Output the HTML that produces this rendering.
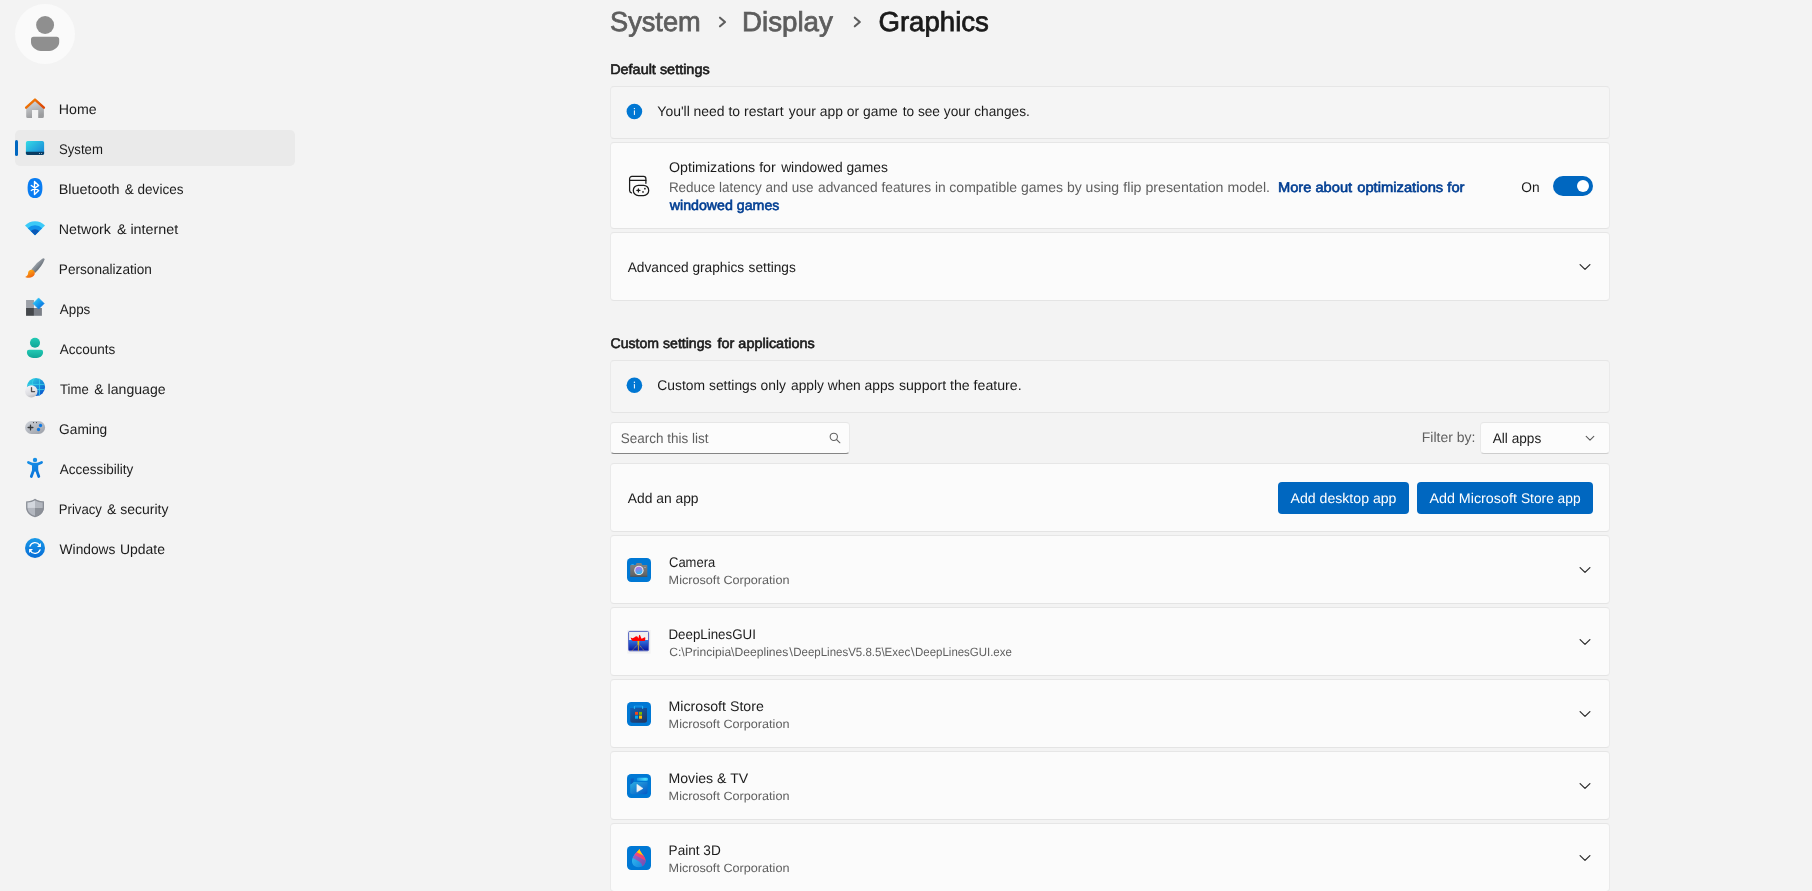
<!DOCTYPE html>
<html lang="en"><head><meta charset="utf-8"><title>Settings</title>
<style>
html,body{margin:0;padding:0;}
body{width:1812px;height:891px;overflow:hidden;background:#f3f3f3;position:relative;font-family:"Liberation Sans",sans-serif;}
.t{text-rendering:geometricPrecision;position:absolute;white-space:pre;line-height:20px;transform-origin:0 50%;display:block;}
.a{position:absolute;box-sizing:border-box;}
.card{position:absolute;box-sizing:border-box;left:610px;width:1000px;background:#fbfbfb;border:1px solid #eaeaea;border-top-color:#e6e6e6;border-bottom-color:#e4e4e4;border-radius:4px;}
.info{background:#f5f5f5;}
svg{position:absolute;overflow:visible;}
#txt{position:absolute;left:0;top:0;width:1812px;height:891px;will-change:transform;}

</style></head>
<body>
<!-- sidebar -->
<div class="a" style="left:15px;top:4px;width:60px;height:60px;border-radius:50%;background:#fafafa;"></div>
<div class="a" style="left:15px;top:130px;width:280px;height:36px;border-radius:5px;background:#eaeaea;"></div>
<div class="a" style="left:15px;top:140px;width:3px;height:16px;border-radius:2px;background:#0067c0;"></div>

<!-- cards -->
<div class="card info" style="top:86px;height:53px;"></div>
<div class="card" style="top:142px;height:87px;"></div>
<div class="card" style="top:232px;height:69px;"></div>
<div class="card info" style="top:360px;height:53px;"></div>
<div class="card" style="top:463px;height:69px;"></div>
<div class="card" style="top:535px;height:69px;"></div>
<div class="card" style="top:607px;height:69px;"></div>
<div class="card" style="top:679px;height:69px;"></div>
<div class="card" style="top:751px;height:69px;"></div>
<div class="card" style="top:823px;height:69px;"></div>

<!-- search + filter -->
<div class="a" style="left:610px;top:422px;width:240px;height:32px;background:#fcfcfc;border:1px solid #e9e9e9;border-top-color:#e6e6e6;border-bottom-color:#858585;border-radius:4px;"></div>
<div class="a" style="left:1480px;top:422px;width:130px;height:32px;background:#fcfcfc;border:1px solid #e9e9e9;border-top-color:#e6e6e6;border-bottom-color:#cdcdcd;border-radius:4px;"></div>

<!-- buttons -->
<div class="a" style="left:1278px;top:482px;width:131px;height:32px;background:#0067c0;border-radius:4px;"></div>
<div class="a" style="left:1417px;top:482px;width:176px;height:32px;background:#0067c0;border-radius:4px;"></div>

<!-- toggle -->
<div class="a" style="left:1553px;top:176px;width:40px;height:20px;background:#0067c0;border-radius:10px;"></div>
<div class="a" style="left:1577px;top:180px;width:12px;height:12px;background:#ffffff;border-radius:6px;"></div>

<svg width="1812" height="891" viewBox="0 0 1812 891" style="left:0;top:0;">
<defs>
<linearGradient id="gRoof" x1="0" y1="0" x2="1" y2="0.6"><stop offset="0" stop-color="#f78a05"/><stop offset="1" stop-color="#de4a05"/></linearGradient>
<linearGradient id="gHouse" x1="0" y1="0" x2="0.3" y2="1"><stop offset="0" stop-color="#dde0e3"/><stop offset="1" stop-color="#9b9c9e"/></linearGradient>
<linearGradient id="gSys" x1="0" y1="0" x2="1" y2="1"><stop offset="0" stop-color="#34dbe6"/><stop offset="1" stop-color="#167fd6"/></linearGradient>
<linearGradient id="gDia" x1="0.2" y1="0.2" x2="0.8" y2="0.8"><stop offset="0" stop-color="#2ac3f8"/><stop offset="1" stop-color="#0875e0"/></linearGradient>
<linearGradient id="gAcc" x1="0" y1="0" x2="0" y2="1"><stop offset="0" stop-color="#22cab4"/><stop offset="1" stop-color="#10a596"/></linearGradient>
<linearGradient id="gGlobe" x1="0.15" y1="0.1" x2="0.85" y2="0.9"><stop offset="0" stop-color="#2ccde0"/><stop offset="1" stop-color="#0858cf"/></linearGradient>
<linearGradient id="gClock" x1="0.3" y1="0" x2="0.6" y2="1"><stop offset="0" stop-color="#f4f4f7"/><stop offset="0.7" stop-color="#dcdce0"/><stop offset="1" stop-color="#b8b8bc"/></linearGradient>
<linearGradient id="gPad" x1="0.1" y1="0" x2="0.9" y2="1"><stop offset="0" stop-color="#cdd1d8"/><stop offset="1" stop-color="#9da1a9"/></linearGradient>
<linearGradient id="gBrushH" x1="0" y1="0" x2="1" y2="1" gradientTransform="rotate(0)"><stop offset="0.3" stop-color="#a4abb3"/><stop offset="0.7" stop-color="#5f676f"/></linearGradient>
<linearGradient id="gBrushT" x1="0.2" y1="0" x2="0.8" y2="1"><stop offset="0" stop-color="#ffb612"/><stop offset="1" stop-color="#ee5a10"/></linearGradient>
<linearGradient id="gPerson" gradientUnits="userSpaceOnUse" x1="30" y1="458" x2="40" y2="478"><stop offset="0" stop-color="#1a94e8"/><stop offset="1" stop-color="#066ed8"/></linearGradient>
<linearGradient id="gUpd" x1="0" y1="0" x2="0" y2="1"><stop offset="0" stop-color="#1a9ae8"/><stop offset="1" stop-color="#066cd6"/></linearGradient>
<linearGradient id="gCam" x1="0" y1="0" x2="0" y2="1"><stop offset="0" stop-color="#858585"/><stop offset="1" stop-color="#606162"/></linearGradient>
<linearGradient id="gLens" x1="0.3" y1="0" x2="0.6" y2="1"><stop offset="0" stop-color="#bb6be8"/><stop offset="1" stop-color="#28bdf2"/></linearGradient>
<linearGradient id="gWater" x1="0" y1="0" x2="0" y2="1"><stop offset="0" stop-color="#3478e2"/><stop offset="1" stop-color="#06129a"/></linearGradient>
<linearGradient id="gBag" x1="0.2" y1="0" x2="0.8" y2="1"><stop offset="0" stop-color="#0f5cb0"/><stop offset="1" stop-color="#223763"/></linearGradient>
<linearGradient id="gMov" x1="0" y1="0" x2="1" y2="1"><stop offset="0" stop-color="#2cade2"/><stop offset="1" stop-color="#0658c4"/></linearGradient>
<linearGradient id="gMovBar" x1="0" y1="0" x2="1" y2="0"><stop offset="0" stop-color="#1a96e4"/><stop offset="0.75" stop-color="#4fe0ff"/><stop offset="1" stop-color="#35c4f4"/></linearGradient>
<linearGradient id="gP3b" x1="0" y1="0" x2="1" y2="1"><stop offset="0" stop-color="#3cd0f6"/><stop offset="1" stop-color="#0f74da"/></linearGradient>
<linearGradient id="gP3p" x1="0" y1="0" x2="1" y2="1"><stop offset="0" stop-color="#a86cd6"/><stop offset="1" stop-color="#7048a8"/></linearGradient>
<linearGradient id="gP3r" x1="0" y1="0" x2="1" y2="1"><stop offset="0" stop-color="#f4548a"/><stop offset="1" stop-color="#ec3868"/></linearGradient>
<clipPath id="cDrop"><path d="M639.6 848.9 C640 851.6 642.2 853.8 644.2 856.8 C646.6 860.4 645.6 864.6 642 866.4 C638.4 868.1 633.9 867 632.4 863.4 C631 859.9 633 856.4 635.5 853.4 C637.4 851.3 639 850 639.6 848.9Z"/></clipPath>
<clipPath id="cShield"><path id="pShield" d="M35 498.8 C37.5 500.5 40.5 501.4 44 501.5 V507 C44 512.4 40 515.8 35 517.2 C30 515.8 26.1 512.4 26.1 507 V501.5 C29.5 501.4 32.5 500.5 35 498.8Z"/></clipPath>
<clipPath id="cGlobe"><circle cx="36" cy="387" r="9.1"/></clipPath>
</defs>
<g fill="#8f8f8f"><circle cx="45.1" cy="25" r="9"/><path d="M33.6 36.8 H56.6 a2.6 2.6 0 0 1 2.6 2.6 V42.3 C59.2 47 54 50.9 49.3 50.9 H40.9 C36.2 50.9 31 47 31 42.3 V39.4 a2.6 2.6 0 0 1 2.6 -2.6z"/></g>
<path d="M26.2 107.6 L35 99.9 L43.9 107.6 V116.4 a1.5 1.5 0 0 1 -1.5 1.5 H38.2 V110 H32 V117.9 H27.7 a1.5 1.5 0 0 1 -1.5 -1.5z" fill="url(#gHouse)"/>
<path d="M26.1 107.7 L35 99.6 L43.9 107.7" stroke="url(#gRoof)" stroke-width="2.4" stroke-linecap="round" stroke-linejoin="round" fill="none"/>
<rect x="25.9" y="140.9" width="18.2" height="14.1" rx="1.8" fill="url(#gSys)"/>
<path d="M25.9 151.8 H44.1 V153.2 a1.8 1.8 0 0 1 -1.8 1.8 H27.7 a1.8 1.8 0 0 1 -1.8 -1.8z" fill="#0a3c62"/>
<circle cx="39.5" cy="153.5" r="0.55" fill="#b7c7d6"/><circle cx="41.6" cy="153.5" r="0.55" fill="#b7c7d6"/>
<path d="M35 177.9 C40.6 177.9 42.4 182 42.4 188 C42.4 194 40.6 198.1 35 198.1 C29.4 198.1 27.6 194 27.6 188 C27.6 182 29.4 177.9 35 177.9Z" fill="#0a7df2"/>
<path d="M31.3 185.5 L38.7 190.6 L34.5 194.5 V181.4 L38.7 185.4 L31.3 190.5" stroke="#fff" stroke-width="1.35" fill="none" stroke-linejoin="round" stroke-linecap="round"/>
<path d="M35 235.2 L25.00 225.54 A13.9 13.9 0 0 1 45.00 225.54Z" fill="#3ccaf7"/>
<path d="M35 235.2 L27.81 228.25 A10.0 10.0 0 0 1 42.19 228.25Z" fill="#1292ea"/>
<path d="M35 235.2 L30.76 231.10 A5.9 5.9 0 0 1 39.24 231.10Z" fill="#0a58b6"/>
<path d="M42.2 258.8 Q43.9 257.6 44.7 259.3 Q42 266.5 35 273 L31.3 269.6 Q36.5 262.5 42.2 258.8Z" fill="url(#gBrushH)"/>
<path d="M28.1 273 C28 270.6 30.3 269.2 32.3 269.8 C34.3 270.4 35.3 272.5 34.6 274.6 C33.6 277.6 29 278.7 25.1 276.9 C27.2 276 28.2 274.8 28.1 273Z" fill="url(#gBrushT)"/>
<rect x="26.05" y="300" width="7.9" height="8" fill="#9da1a8"/>
<rect x="26.05" y="308" width="7.9" height="7.8" fill="#44474b"/>
<rect x="33.95" y="308" width="7.95" height="7.8" fill="#7b7f87"/>
<path d="M38.6 297.9 L44.2 303.5 L38.6 309.1 L33 303.5Z" fill="url(#gDia)" stroke="url(#gDia)" stroke-width="0.6" stroke-linejoin="round"/>
<circle cx="35" cy="342.8" r="5.05" fill="url(#gAcc)"/>
<path d="M29 349.8 H41 a2.1 2.1 0 0 1 2.1 2.1 c0 4.1 -3.6 6.2 -8.1 6.2 s-8.1 -2.1 -8.1 -6.2 a2.1 2.1 0 0 1 2.1 -2.1z" fill="url(#gAcc)"/>
<circle cx="36" cy="387" r="9.1" fill="url(#gGlobe)"/>
<g clip-path="url(#cGlobe)" stroke="#3ad6ea" stroke-width="0.9" fill="none" opacity="0.9"><path d="M26 384.4 H46 M26 389.6 H46 M39.4 377 V397"/><path d="M34 377.5 Q31.5 382 32.5 388"/></g>
<circle cx="31.3" cy="391.4" r="6.2" fill="url(#gClock)"/>
<path d="M31.5 387.6 V391.6 H34.6" stroke="#4f4f52" stroke-width="1.3" fill="none" stroke-linecap="round" stroke-linejoin="round"/>
<rect x="25.05" y="421.1" width="20.05" height="12.8" rx="6.4" fill="url(#gPad)"/>
<path d="M28.1 427.5 H32.9 M30.5 425.1 V429.9" stroke="#36383b" stroke-width="1.3" stroke-linecap="round"/>
<circle cx="33.5" cy="422.6" r="0.55" fill="#3c3d40"/><circle cx="36.5" cy="422.6" r="0.55" fill="#3c3d40"/>
<circle cx="40.5" cy="425.5" r="1.65" fill="#0f78e2"/><circle cx="38.5" cy="429.5" r="1.65" fill="#0f78e2"/>
<g fill="url(#gPerson)" stroke="url(#gPerson)"><circle cx="35" cy="459.9" r="2.2" stroke="none"/><path d="M28.4 462.4 L32.6 464.2 H37.4 L41.6 462.4" fill="none" stroke-width="2.7" stroke-linecap="round" stroke-linejoin="round"/><rect x="32" y="463.2" width="6.2" height="8.3" stroke="none"/><path d="M33.4 470.5 L31.3 476.5 M36.7 470.5 L38.8 476.5" fill="none" stroke-width="2.8" stroke-linecap="round"/></g>
<g clip-path="url(#cShield)"><rect x="26" y="498" width="9" height="9.7" fill="#d3d7de"/><rect x="35" y="498" width="9.1" height="9.7" fill="#b3b7bf"/><rect x="26" y="507.7" width="9" height="10" fill="#b3b7bf"/><rect x="35" y="507.7" width="9.1" height="10" fill="#8d9199"/><path d="M35 498.8 C37.5 500.5 40.5 501.4 44 501.5 V507 C44 512.4 40 515.8 35 517.2 C30 515.8 26.1 512.4 26.1 507 V501.5 C29.5 501.4 32.5 500.5 35 498.8Z" fill="none" stroke="#8a8e96" stroke-width="2.6"/></g>
<circle cx="35" cy="548" r="10" fill="url(#gUpd)"/>
<g fill="none" stroke="#fff" stroke-width="1.3" stroke-linecap="round"><path d="M29.9 546.2 A5.4 5.4 0 0 1 39.6 545.2"/><path d="M40.1 549.8 A5.4 5.4 0 0 1 30.4 550.8"/></g>
<path d="M40.9 543.0 V546.9 H37.0Z M29.1 553.0 V549.1 H33.0Z" fill="#fff"/>
<circle cx="634.4" cy="111.5" r="7.8" fill="#0077d3"/>
<circle cx="634.4" cy="108.6" r="0.7" fill="#fff"/><rect x="633.9" y="110.3" width="1" height="4.6" rx="0.5" fill="#fff"/>
<circle cx="634.4" cy="385.2" r="7.8" fill="#0077d3"/>
<circle cx="634.4" cy="382.3" r="0.7" fill="#fff"/><rect x="633.9" y="384.0" width="1" height="4.6" rx="0.5" fill="#fff"/>
<path d="M720 17.7 L725 22 L720 26.3" fill="none" stroke="#5d5d5d" stroke-width="2.1" stroke-linecap="round" stroke-linejoin="round"/>
<path d="M854.8 17.7 L859.8 22 L854.8 26.3" fill="none" stroke="#5d5d5d" stroke-width="2.1" stroke-linecap="round" stroke-linejoin="round"/>
<g fill="none" stroke="#1b1b1b" stroke-width="1.25" stroke-linecap="round" stroke-linejoin="round"><path d="M645.9 183.3 V178.7 a2.3 2.3 0 0 0 -2.3 -2.3 H631.9 a2.3 2.3 0 0 0 -2.3 2.3 V190.6 a2.3 2.3 0 0 0 1.9 2.2"/><path d="M629.6 180.3 H645.9"/><rect x="633.3" y="185.3" width="15.4" height="10.2" rx="5.1"/><path d="M636.9 190.4 H639.9 M638.4 188.9 V191.9"/></g>
<circle cx="644.9" cy="188.7" r="0.85" fill="#1b1b1b"/><circle cx="643" cy="191.9" r="0.85" fill="#1b1b1b"/>
<path d="M1580.1 264.6 L1585 269.4 L1589.9 264.6" fill="none" stroke="#2b2b2b" stroke-width="1.25" stroke-linecap="round" stroke-linejoin="round"/>
<path d="M1580.1 567.6 L1585 572.4 L1589.9 567.6" fill="none" stroke="#2b2b2b" stroke-width="1.25" stroke-linecap="round" stroke-linejoin="round"/>
<path d="M1580.1 639.6 L1585 644.4 L1589.9 639.6" fill="none" stroke="#2b2b2b" stroke-width="1.25" stroke-linecap="round" stroke-linejoin="round"/>
<path d="M1580.1 711.6 L1585 716.4 L1589.9 711.6" fill="none" stroke="#2b2b2b" stroke-width="1.25" stroke-linecap="round" stroke-linejoin="round"/>
<path d="M1580.1 783.6 L1585 788.4 L1589.9 783.6" fill="none" stroke="#2b2b2b" stroke-width="1.25" stroke-linecap="round" stroke-linejoin="round"/>
<path d="M1580.1 855.6 L1585 860.4 L1589.9 855.6" fill="none" stroke="#2b2b2b" stroke-width="1.25" stroke-linecap="round" stroke-linejoin="round"/>
<path d="M1586.2 436.4 L1590 440.1 L1593.8 436.4" fill="none" stroke="#5a5a5a" stroke-width="1.1" stroke-linecap="round" stroke-linejoin="round"/>
<g fill="none" stroke="#616161" stroke-width="1.05" stroke-linecap="round"><circle cx="833.8" cy="436.8" r="3.65"/><path d="M836.5 439.5 L839.9 442.8"/></g>
<rect x="627" y="558" width="24" height="24" rx="4.2" fill="#0078d4"/>
<rect x="627" y="702" width="24" height="24" rx="4.2" fill="#0078d4"/>
<rect x="627" y="774" width="24" height="24" rx="4.2" fill="#0078d4"/>
<rect x="627" y="846" width="24" height="24" rx="4.2" fill="#0078d4"/>
<path d="M630.2 565.8 a0.8 0.8 0 0 1 0.8 -0.8 H635.6 L636.3 563.5 a0.9 0.9 0 0 1 0.8 -0.6 H640.9 a0.9 0.9 0 0 1 0.8 0.6 L642.3 565 H646.5 a0.8 0.8 0 0 1 0.8 0.8 V576.6 H630.2z" fill="url(#gCam)"/>
<rect x="630.2" y="575.8" width="17.1" height="0.9" fill="#505152"/>
<rect x="631.2" y="564.2" width="2.8" height="0.8" rx="0.4" fill="#32b4f2"/>
<circle cx="638.9" cy="570.4" r="4.7" fill="#e9e9ec"/><circle cx="638.9" cy="570.4" r="3.6" fill="url(#gLens)"/>
<rect x="644.2" y="567" width="1.6" height="0.9" rx="0.3" fill="#a9abad"/>
<rect x="627.3" y="630" width="23.3" height="23.6" fill="#f1f1f1"/>
<rect x="628.6" y="631.4" width="20" height="19.4" rx="1.2" fill="#f0f0f0"/>
<path d="M628.6 639.9 H648.6 V649.6 a1.2 1.2 0 0 1 -1.2 1.2 H629.8 a1.2 1.2 0 0 1 -1.2 -1.2z" fill="url(#gWater)"/>
<rect x="628.6" y="631.4" width="20" height="19.4" rx="1.2" fill="none" stroke="#5565c2" stroke-width="1"/>
<path d="M630.6 637.6 L632.6 638.2 L634.2 637.4 L636 636.2 L637.4 636.4 L638.4 638.4 L639.1 635.2 L639.9 634.8 L641 637.4 L641.6 638.8 L643.2 638 L644.8 637.2 L645.4 637.8 L645.1 640.6 L644.6 641 H632.6 L631.3 639.6Z" fill="#ff0000"/>
<rect x="637.5" y="640.9" width="1.7" height="4" fill="#f2c000"/><rect x="637.9" y="644.5" width="1" height="6.3" fill="#c9a032"/>
<path d="M637.8 644.5 L632 650.8 M639 644.5 L644.2 650.8" stroke="#c0a050" stroke-width="0.8" stroke-dasharray="1.2 0.7" fill="none"/>
<path d="M630.2 708 H647 V720.2 a2.5 2.5 0 0 1 -2.5 2.5 H632.7 a2.5 2.5 0 0 1 -2.5 -2.5z" fill="url(#gBag)"/>
<path d="M634.4 708.6 V706.1 H642.6 V708.6" fill="none" stroke="#1b98ea" stroke-width="0.9"/>
<path d="M634.4 708.8 V706.2 M642.6 708.8 V706.2" stroke="#2cc0f4" stroke-width="0.9"/>
<rect x="635" y="711.9" width="3" height="2.9" fill="#f1491f"/><rect x="639" y="711.9" width="3" height="2.9" fill="#7bba00"/><rect x="635" y="715.6" width="3" height="3.1" fill="#00aaf2"/><rect x="639" y="715.6" width="3" height="3.1" fill="#ffb900"/>
<path d="M630.2 784.6 L633.5 782 H647.5 V792.2 a2 2 0 0 1 -2 2 H632.2 a2 2 0 0 1 -2 -2z" fill="url(#gMov)"/>
<rect x="636.9" y="777.8" width="11" height="3" rx="1" fill="url(#gMovBar)"/>
<path d="M630.6 779.4 a1 1 0 0 1 1 -1 H634 L633.4 782.2 L630.6 784.6z" fill="#0a5fc0"/>
<path d="M636.9 784.3 V792.1 L643 788.4Z" fill="#f2f2f4" stroke="#f2f2f4" stroke-width="0.5" stroke-linejoin="round"/>
<g clip-path="url(#cDrop)"><rect x="630" y="848" width="18" height="21" fill="url(#gP3b)"/><path d="M630 856.3 L639.2 861.6 Q642.2 863.6 642.5 867 L648 868 V846 H630Z" fill="url(#gP3p)"/><path d="M630 852.4 L644.9 860.2 Q646 861 645.6 863 L648 863 V846 H630Z" fill="url(#gP3r)"/><path d="M630 848.7 L648 857.9 V846 H630Z" fill="#ffd200"/></g>
</svg>
<div id="txt">
<span class="t" style="left:0;top:0;font-size:14px;color:#1b1b1b;transform:translate(58.79px,99.25px) scaleX(1.0130);">Home</span>
<span class="t" style="left:0;top:0;font-size:14px;color:#1b1b1b;transform:translate(58.98px,139.25px) scaleX(0.9398);">System</span>
<span class="t" style="left:0;top:0;font-size:14px;color:#1b1b1b;transform:translate(58.65px,179.25px) scaleX(1.0311);">Bluetooth</span>
<span class="t" style="left:0;top:0;font-size:14px;color:#1b1b1b;transform:translate(124.79px,179.25px) scaleX(0.9661);">&amp; devices</span>
<span class="t" style="left:0;top:0;font-size:14px;color:#1b1b1b;transform:translate(58.73px,219.25px) scaleX(1.0170);">Network</span>
<span class="t" style="left:0;top:0;font-size:14px;color:#1b1b1b;transform:translate(116.88px,219.25px) scaleX(1.0244);">&amp; internet</span>
<span class="t" style="left:0;top:0;font-size:14px;color:#1b1b1b;transform:translate(58.81px,259.25px) scaleX(0.9726);">Personalization</span>
<span class="t" style="left:0;top:0;font-size:14px;color:#1b1b1b;transform:translate(59.77px,299.25px) scaleX(0.9576);">Apps</span>
<span class="t" style="left:0;top:0;font-size:14px;color:#1b1b1b;transform:translate(59.74px,339.25px) scaleX(0.9660);">Accounts</span>
<span class="t" style="left:0;top:0;font-size:14px;color:#1b1b1b;transform:translate(60.11px,379.25px) scaleX(0.9355);">Time</span>
<span class="t" style="left:0;top:0;font-size:14px;color:#1b1b1b;transform:translate(94.27px,379.25px) scaleX(1.0067);">&amp; language</span>
<span class="t" style="left:0;top:0;font-size:14px;color:#1b1b1b;transform:translate(59.11px,419.25px) scaleX(0.9796);">Gaming</span>
<span class="t" style="left:0;top:0;font-size:14px;color:#1b1b1b;transform:translate(59.74px,459.25px) scaleX(0.9652);">Accessibility</span>
<span class="t" style="left:0;top:0;font-size:14px;color:#1b1b1b;transform:translate(58.82px,499.25px) scaleX(0.9380);">Privacy</span>
<span class="t" style="left:0;top:0;font-size:14px;color:#1b1b1b;transform:translate(107.02px,499.25px) scaleX(0.9997);">&amp; security</span>
<span class="t" style="left:0;top:0;font-size:14px;color:#1b1b1b;transform:translate(59.60px,539.25px) scaleX(0.9831);">Windows</span>
<span class="t" style="left:0;top:0;font-size:14px;color:#1b1b1b;transform:translate(119.92px,539.25px) scaleX(0.9990);">Update</span>
<span class="t" style="left:0;top:0;font-size:27.5px;color:#5d5d5d;transform:translate(610.04px,12.37px) scaleX(0.9883);-webkit-text-stroke:0.75px #5d5d5d;">System</span>
<span class="t" style="left:0;top:0;font-size:27.5px;color:#5d5d5d;transform:translate(741.92px,12.37px) scaleX(1.0091);-webkit-text-stroke:0.75px #5d5d5d;">Display</span>
<span class="t" style="left:0;top:0;font-size:27.5px;color:#1a1a1a;transform:translate(878.41px,12.37px) scaleX(1.0039);-webkit-text-stroke:0.75px #1a1a1a;">Graphics</span>
<span class="t" style="left:0;top:0;font-size:14px;color:#1a1a1a;transform:translate(610.13px,59.35px) scaleX(1.0313);-webkit-text-stroke:0.6px #1a1a1a;">Default settings</span>
<span class="t" style="left:0;top:0;font-size:14px;color:#1a1a1a;transform:translate(610.55px,333.05px) scaleX(1.0063);-webkit-text-stroke:0.6px #1a1a1a;">Custom settings</span>
<span class="t" style="left:0;top:0;font-size:14px;color:#1a1a1a;transform:translate(717.45px,333.05px) scaleX(1.0326);-webkit-text-stroke:0.6px #1a1a1a;">for applications</span>
<span class="t" style="left:0;top:0;font-size:14px;color:#1b1b1b;transform:translate(657.36px,101.25px) scaleX(0.9957);">You'll need to restart</span>
<span class="t" style="left:0;top:0;font-size:14px;color:#1b1b1b;transform:translate(788.83px,101.25px) scaleX(0.9926);">your app or game</span>
<span class="t" style="left:0;top:0;font-size:14px;color:#1b1b1b;transform:translate(902.66px,101.25px) scaleX(0.9785);">to see your changes.</span>
<span class="t" style="left:0;top:0;font-size:14px;color:#1b1b1b;transform:translate(657.31px,375.25px) scaleX(0.9907);">Custom settings only</span>
<span class="t" style="left:0;top:0;font-size:14px;color:#1b1b1b;transform:translate(790.98px,375.25px) scaleX(0.9854);">apply when apps</span>
<span class="t" style="left:0;top:0;font-size:14px;color:#1b1b1b;transform:translate(898.89px,375.25px) scaleX(1.0106);">support the feature.</span>
<span class="t" style="left:0;top:0;font-size:14px;color:#1b1b1b;transform:translate(669.01px,157.45px) scaleX(1.0161);">Optimizations for</span>
<span class="t" style="left:0;top:0;font-size:14px;color:#1b1b1b;transform:translate(781.13px,157.45px) scaleX(0.9872);">windowed games</span>
<span class="t" style="left:0;top:0;font-size:14px;color:#5f5f5f;transform:translate(668.88px,177.25px) scaleX(0.9621);">Reduce latency and use</span>
<span class="t" style="left:0;top:0;font-size:14px;color:#5f5f5f;transform:translate(817.98px,177.25px) scaleX(0.9824);">advanced features in</span>
<span class="t" style="left:0;top:0;font-size:14px;color:#5f5f5f;transform:translate(949.35px,177.25px) scaleX(1.0005);">compatible games by using</span>
<span class="t" style="left:0;top:0;font-size:14px;color:#5f5f5f;transform:translate(1123.36px,177.25px) scaleX(1.0130);">flip presentation model.</span>
<span class="t" style="left:0;top:0;font-size:14px;color:#003e92;transform:translate(1277.93px,177.25px) scaleX(1.0482);-webkit-text-stroke:0.6px #003e92;">More about</span>
<span class="t" style="left:0;top:0;font-size:14px;color:#003e92;transform:translate(1357.23px,177.25px) scaleX(1.0524);-webkit-text-stroke:0.6px #003e92;">optimizations for</span>
<span class="t" style="left:0;top:0;font-size:14px;color:#003e92;transform:translate(669.80px,195.45px) scaleX(1.0134);-webkit-text-stroke:0.6px #003e92;">windowed games</span>
<span class="t" style="left:0;top:0;font-size:14px;color:#1b1b1b;transform:translate(1521.20px,177.35px) scaleX(0.9817);">On</span>
<span class="t" style="left:0;top:0;font-size:14px;color:#1b1b1b;transform:translate(627.72px,256.75px) scaleX(0.9781);">Advanced graphics</span>
<span class="t" style="left:0;top:0;font-size:14px;color:#1b1b1b;transform:translate(748.60px,256.75px) scaleX(0.9790);">settings</span>
<span class="t" style="left:0;top:0;font-size:14px;color:#5f5f5f;transform:translate(620.79px,428.15px) scaleX(0.9627);">Search this list</span>
<span class="t" style="left:0;top:0;font-size:14px;color:#5f5f5f;transform:translate(1421.75px,427.45px) scaleX(0.9990);">Filter by:</span>
<span class="t" style="left:0;top:0;font-size:14px;color:#1b1b1b;transform:translate(1492.71px,427.95px) scaleX(0.9741);">All apps</span>
<span class="t" style="left:0;top:0;font-size:14px;color:#1b1b1b;transform:translate(627.72px,488.25px) scaleX(0.9889);">Add an app</span>
<span class="t" style="left:0;top:0;font-size:14px;color:#ffffff;transform:translate(1290.53px,488.15px) scaleX(1.0079);">Add desktop app</span>
<span class="t" style="left:0;top:0;font-size:14px;color:#ffffff;transform:translate(1429.46px,488.15px) scaleX(1.0213);">Add Microsoft</span>
<span class="t" style="left:0;top:0;font-size:14px;color:#ffffff;transform:translate(1520.89px,488.15px) scaleX(0.9830);">Store app</span>
<span class="t" style="left:0;top:0;font-size:14px;color:#1b1b1b;transform:translate(669.00px,552.35px) scaleX(0.9286);">Camera</span>
<span class="t" style="left:0;top:0;font-size:12px;color:#5f5f5f;transform:translate(668.61px,570.04px) scaleX(1.0537);">Microsoft Corporation</span>
<span class="t" style="left:0;top:0;font-size:14px;color:#1b1b1b;transform:translate(668.45px,624.35px) scaleX(0.9521);">DeepLinesGUI</span>
<span class="t" style="left:0;top:0;font-size:12px;color:#5f5f5f;transform:translate(669.18px,642.24px) scaleX(1.0095);">C:\Principia\Deeplines</span>
<span class="t" style="left:0;top:0;font-size:12px;color:#5f5f5f;transform:translate(789.22px,642.24px) scaleX(1.1129);">\</span>
<span class="t" style="left:0;top:0;font-size:12px;color:#5f5f5f;transform:translate(793.22px,642.24px) scaleX(0.9576);">DeepLinesV5.8.5\Exec</span>
<span class="t" style="left:0;top:0;font-size:12px;color:#5f5f5f;transform:translate(910.83px,642.24px) scaleX(1.1722);">\</span>
<span class="t" style="left:0;top:0;font-size:12px;color:#5f5f5f;transform:translate(915.11px,642.24px) scaleX(0.9537);">DeepLinesGUI.exe</span>
<span class="t" style="left:0;top:0;font-size:14px;color:#1b1b1b;transform:translate(668.46px,696.35px) scaleX(1.0131);">Microsoft Store</span>
<span class="t" style="left:0;top:0;font-size:12px;color:#5f5f5f;transform:translate(668.61px,714.04px) scaleX(1.0537);">Microsoft Corporation</span>
<span class="t" style="left:0;top:0;font-size:14px;color:#1b1b1b;transform:translate(668.50px,768.35px) scaleX(1.0075);">Movies &amp; TV</span>
<span class="t" style="left:0;top:0;font-size:12px;color:#5f5f5f;transform:translate(668.61px,786.04px) scaleX(1.0537);">Microsoft Corporation</span>
<span class="t" style="left:0;top:0;font-size:14px;color:#1b1b1b;transform:translate(668.56px,840.35px) scaleX(0.9720);">Paint 3D</span>
<span class="t" style="left:0;top:0;font-size:12px;color:#5f5f5f;transform:translate(668.61px,858.04px) scaleX(1.0537);">Microsoft Corporation</span>
</div>
</body></html>
